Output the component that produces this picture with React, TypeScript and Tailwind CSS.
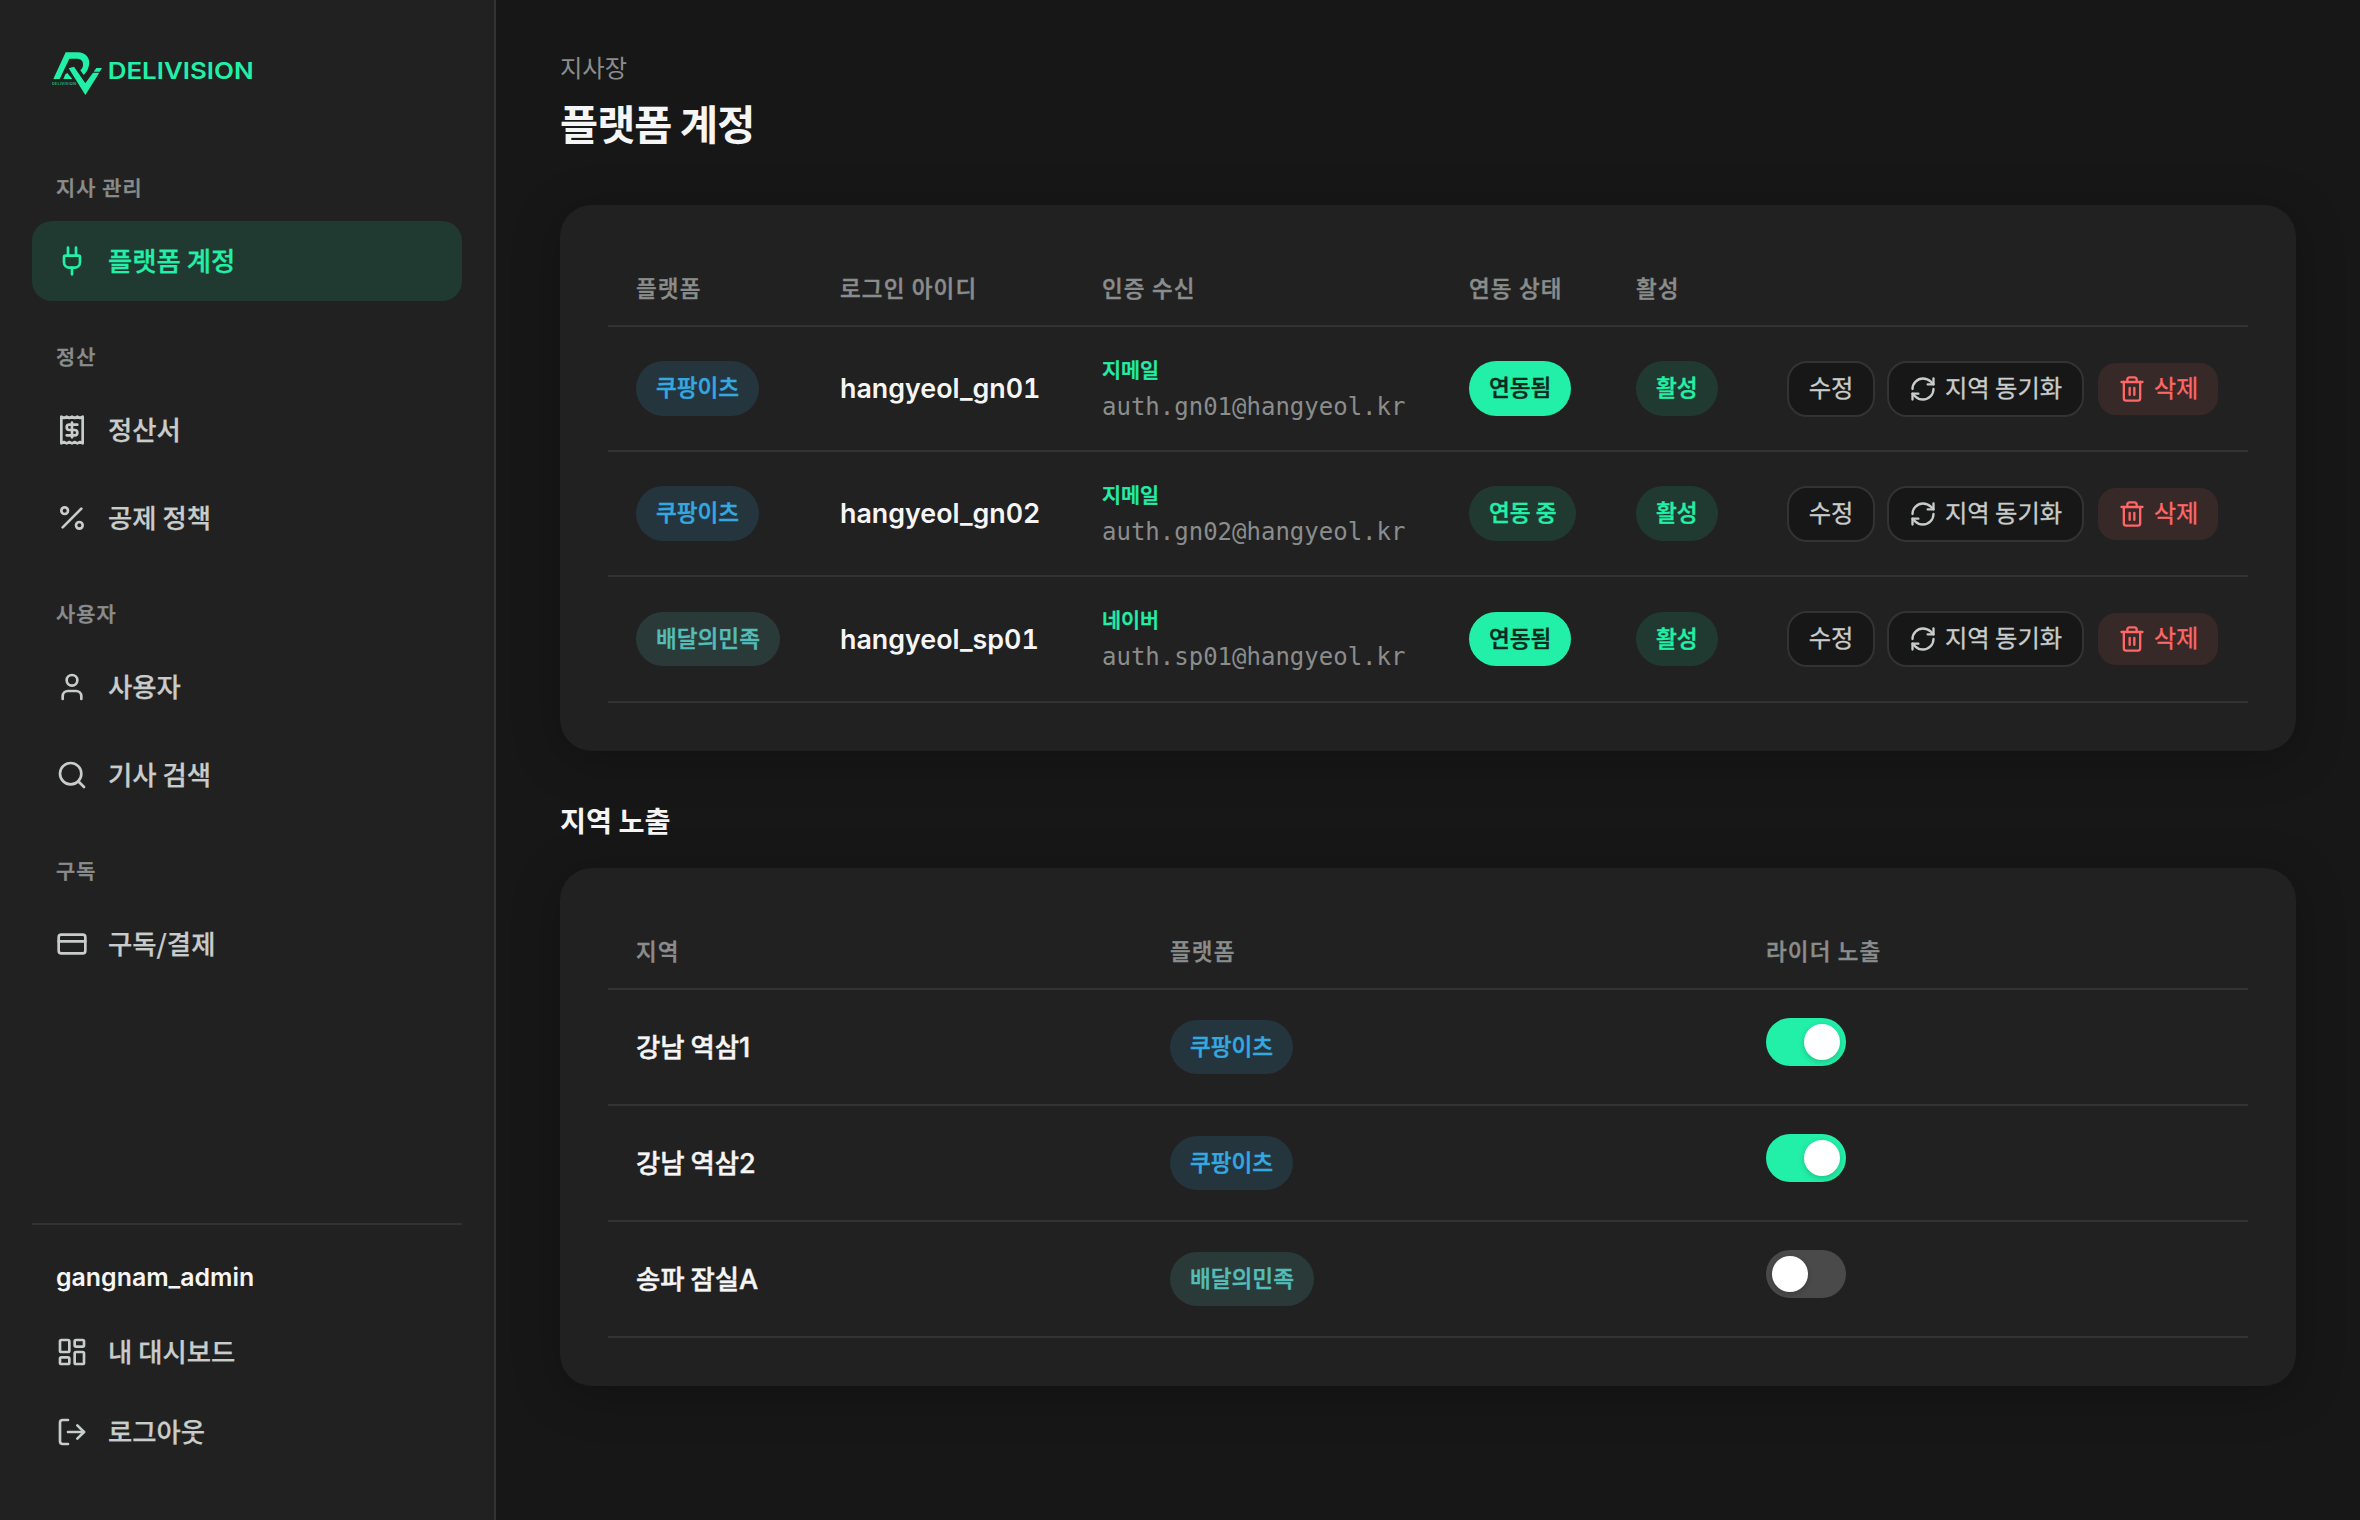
import {
  CreditCard,
  LayoutDashboard,
  LogOut,
  Percent,
  Plug,
  Receipt,
  RefreshCw,
  Search,
  Trash2,
  User,
  type LucideIcon,
} from 'lucide-react';

interface NavGroup {
  title: string;
  items: { label: string; icon: LucideIcon; active?: boolean }[];
}

interface Account {
  platform: string;
  loginId: string;
  channel: string;
  email: string;
  linked: boolean;
}

interface Region {
  name: string;
  no?: string;
  platform: string;
  visible: boolean;
}

const NAV: NavGroup[] = [
  { title: '지사 관리', items: [{ label: '플랫폼 계정', icon: Plug, active: true }] },
  {
    title: '정산',
    items: [
      { label: '정산서', icon: Receipt },
      { label: '공제 정책', icon: Percent },
    ],
  },
  {
    title: '사용자',
    items: [
      { label: '사용자', icon: User },
      { label: '기사 검색', icon: Search },
    ],
  },
  { title: '구독', items: [{ label: '구독/결제', icon: CreditCard }] },
];

const ACCOUNTS: Account[] = [
  { platform: '쿠팡이츠', loginId: 'hangyeol_gn01', channel: '지메일', email: 'auth.gn01@hangyeol.kr', linked: true },
  { platform: '쿠팡이츠', loginId: 'hangyeol_gn02', channel: '지메일', email: 'auth.gn02@hangyeol.kr', linked: false },
  { platform: '배달의민족', loginId: 'hangyeol_sp01', channel: '네이버', email: 'auth.sp01@hangyeol.kr', linked: true },
];

const REGIONS: Region[] = [
  { name: '강남 역삼', no: '1', platform: '쿠팡이츠', visible: true },
  { name: '강남 역삼', no: '2', platform: '쿠팡이츠', visible: true },
  { name: '송파 잠실', no: 'A', platform: '배달의민족', visible: false },
];

// Noto Sans CJK jumps from medium to bold, the thin stroke fills in a semibold
const SEMI = 'font-medium [-webkit-text-stroke:0.45px_currentColor]';

const PILL = `inline-flex h-[54.4px] items-center rounded-full px-5 pb-[3px] text-[22.6px] whitespace-nowrap align-middle ${SEMI}`;

function Logo() {
  return (
    <svg width="202" height="46" viewBox="66 63 606 138" className="block">
      <g fill="#22f0a8">
        <path d="M70 147 107 67H142C170 67 183 88 176 110 173 120 168 128 161 135L151 121C155 117 158 112 159 107 161 95 154 86 142 86H118L89 147Z" />
        <path d="M116 115 132 110 166 160 189 128H208L166 195 Z" />
        <path d="M112 129 127 147H100L106 133Z" />
        <path d="M199 114H216L209 125H191Z" />
      </g>
      <text x="66" y="166" fill="#22f0a8" fontSize="11" textLength="72" className="font-['Inter']">
        DELIVISION
      </text>
      <text
        x="233"
        y="147"
        fill="#22f0a8"
        fontSize="69"
        fontWeight="600"
        textLength="438"
        lengthAdjust="spacingAndGlyphs"
        className="font-['Inter']"
      >
        DELIVISION
      </text>
    </svg>
  );
}

function NavItem({ label, icon: Icon, active }: { label: string; icon: LucideIcon; active?: boolean }) {
  return (
    <a
      className={`flex h-20 items-center gap-5 rounded-[20px] px-6 text-[26.4px] font-medium ${
        active ? 'bg-[#213a31] text-[#22f0a8]' : 'text-[#c8cccb]'
      }`}
    >
      <Icon size={32} strokeWidth={2} />
      <span className="pb-[3px] [-webkit-text-stroke:0.25px_currentColor]">{label}</span>
    </a>
  );
}

function Sidebar() {
  return (
    <aside className="flex w-[496px] shrink-0 flex-col border-r-2 border-[#333333] bg-[#212121] px-8 pt-[51px] pb-12">
      <div className="h-[115px] pl-[20px]">
        <Logo />
      </div>
      <nav className="flex flex-col">
        {NAV.map((group) => (
          <div key={group.title} className="mb-[34px]">
            <div
              className={`flex h-[55px] items-start px-6 pt-[7px] text-[20.8px] leading-[28px] tracking-[1.1px] text-[#8a8d8c] ${SEMI}`}
            >
              {group.title}
            </div>
            <div className="flex flex-col gap-2">
              {group.items.map((item) => (
                <NavItem key={item.label} {...item} />
              ))}
            </div>
          </div>
        ))}
      </nav>
      <div className="mt-auto border-t-2 border-[#333333] pt-8">
        <div className="h-[55px] px-6 font-['Inter'] text-[24.9px] leading-[40px] font-semibold text-[#f5f5f5]">
          gangnam_admin
        </div>
        <NavItem label="내 대시보드" icon={LayoutDashboard} />
        <NavItem label="로그아웃" icon={LogOut} />
      </div>
    </aside>
  );
}

function PlatformPill({ name }: { name: string }) {
  const tone = name === '쿠팡이츠' ? 'bg-[#24353e] text-[#35a8e0]' : 'bg-[#2a3a39] text-[#55bdb8]';
  return <span className={`${PILL} ${tone}`}>{name}</span>;
}

function Toggle({ on }: { on: boolean }) {
  return (
    <span
      className={`flex h-12 w-20 items-center rounded-full px-1.5 ${on ? 'justify-end bg-[#22f0a8]' : 'bg-[#4a4a4a]'}`}
    >
      <span className="size-9 rounded-full bg-white shadow-[0_2px_6px_rgba(0,0,0,0.2)]" />
    </span>
  );
}

function HeadCell({ children }: { children?: string }) {
  return (
    <th
      className={`h-[74px] border-b-2 border-[#333333] px-7 pb-[3px] text-left text-[22.5px] tracking-[1.15px] whitespace-nowrap text-[#8a8d8c] ${SEMI}`}
    >
      {children}
    </th>
  );
}

function AccountTable() {
  return (
    <section className="rounded-[32px] bg-[#212121] p-12 shadow-[0_8px_48px_rgba(0,0,0,0.25)]">
      <table className="w-full table-fixed border-separate border-spacing-0">
        <colgroup>
          <col className="w-[204px]" />
          <col className="w-[262px]" />
          <col className="w-[367px]" />
          <col className="w-[167px]" />
          <col className="w-[138px]" />
          <col />
        </colgroup>
        <thead>
          <tr>
            <HeadCell>플랫폼</HeadCell>
            <HeadCell>로그인 아이디</HeadCell>
            <HeadCell>인증 수신</HeadCell>
            <HeadCell>연동 상태</HeadCell>
            <HeadCell>활성</HeadCell>
            <HeadCell />
          </tr>
        </thead>
        <tbody className="[&_td]:border-b-2 [&_td]:border-[#333333] [&_td]:px-7">
          {ACCOUNTS.map((a) => (
            <tr key={a.loginId} className="h-[125px] last:h-[126px]">
              <td>
                <PlatformPill name={a.platform} />
              </td>
              <td className="font-['Inter'] text-[26.85px] font-semibold text-[#f5f5f5] tabular-nums">{a.loginId}</td>
              <td>
                <div className={`text-[20.7px] leading-[34px] text-[#22f0a8] ${SEMI}`}>{a.channel}</div>
                <div className="mt-[2px] font-['DejaVu_Sans_Mono'] text-[24px] leading-[38px] text-[#8a8d8c]">
                  {a.email}
                </div>
              </td>
              <td>
                <span className={`${PILL} ${a.linked ? 'bg-[#22f0a8] text-[#0c2a1e]' : 'bg-[#213a31] text-[#22f0a8]'}`}>
                  {a.linked ? '연동됨' : '연동 중'}
                </span>
              </td>
              <td>
                <span className={`${PILL} bg-[#213a31] text-[#22f0a8]`}>활성</span>
              </td>
              <td>
                <div className="flex items-center justify-end pr-[2px] text-[24.3px] whitespace-nowrap text-[#c8cccb] [&_button]:flex [&_button]:items-center [&_button]:justify-center [&_button]:gap-2 [&_span]:pb-[3px] [&_span]:[-webkit-text-stroke:0.3px_currentColor]">
                  <button className="mr-3 h-14 w-[88px] rounded-[20px] border-2 border-[#333333] bg-[#171717]">
                    <span>수정</span>
                  </button>
                  <button className="mr-3.5 h-14 w-[197px] rounded-[20px] border-2 border-[#333333] bg-[#171717]">
                    <RefreshCw size={28} strokeWidth={2} />
                    <span>지역 동기화</span>
                  </button>
                  <button className="h-[52px] w-[120px] rounded-[18px] bg-[#372928] text-[#ff6666]">
                    <Trash2 size={28} strokeWidth={2} />
                    <span>삭제</span>
                  </button>
                </div>
              </td>
            </tr>
          ))}
        </tbody>
      </table>
    </section>
  );
}

function RegionTable() {
  return (
    <section className="rounded-[32px] bg-[#212121] p-12 shadow-[0_8px_48px_rgba(0,0,0,0.25)]">
      <table className="w-full table-fixed border-separate border-spacing-0">
        <colgroup>
          <col className="w-[534px]" />
          <col className="w-[596px]" />
          <col />
        </colgroup>
        <thead>
          <tr>
            <HeadCell>지역</HeadCell>
            <HeadCell>플랫폼</HeadCell>
            <HeadCell>라이더 노출</HeadCell>
          </tr>
        </thead>
        <tbody className="[&_td]:h-[116px] [&_td]:border-b-2 [&_td]:border-[#333333] [&_td]:px-7">
          {REGIONS.map((r) => (
            <tr key={`${r.name}${r.no}`}>
              <td className={`text-[26.4px] text-[#f5f5f5] ${SEMI}`}>
                {r.name}
                <span className="font-['Inter'] text-[27px]">{r.no}</span>
              </td>
              <td>
                <PlatformPill name={r.platform} />
              </td>
              <td className="pb-[10px]">
                <Toggle on={r.visible} />
              </td>
            </tr>
          ))}
        </tbody>
      </table>
    </section>
  );
}

export default function App() {
  return (
    <div className="flex h-[1520px] w-[2360px] overflow-hidden bg-[#171717] font-['Noto_Sans_CJK_KR',sans-serif]">
      <Sidebar />
      <main className="flex-1 px-16 pt-[48px]">
        <p className="h-[42px] text-[24.3px] leading-[38px] text-[#8a8d8c]">지사장</p>
        <h1 className="mb-[51px] h-[64px] text-[41.4px] leading-[64px] font-bold tracking-[-0.9px] text-[#f5f5f5]">
          플랫폼 계정
        </h1>
        <AccountTable />
        <h2 className="h-[117px] pt-[47px] text-[28.3px] leading-[44px] font-bold text-[#f5f5f5]">지역 노출</h2>
        <RegionTable />
      </main>
    </div>
  );
}
